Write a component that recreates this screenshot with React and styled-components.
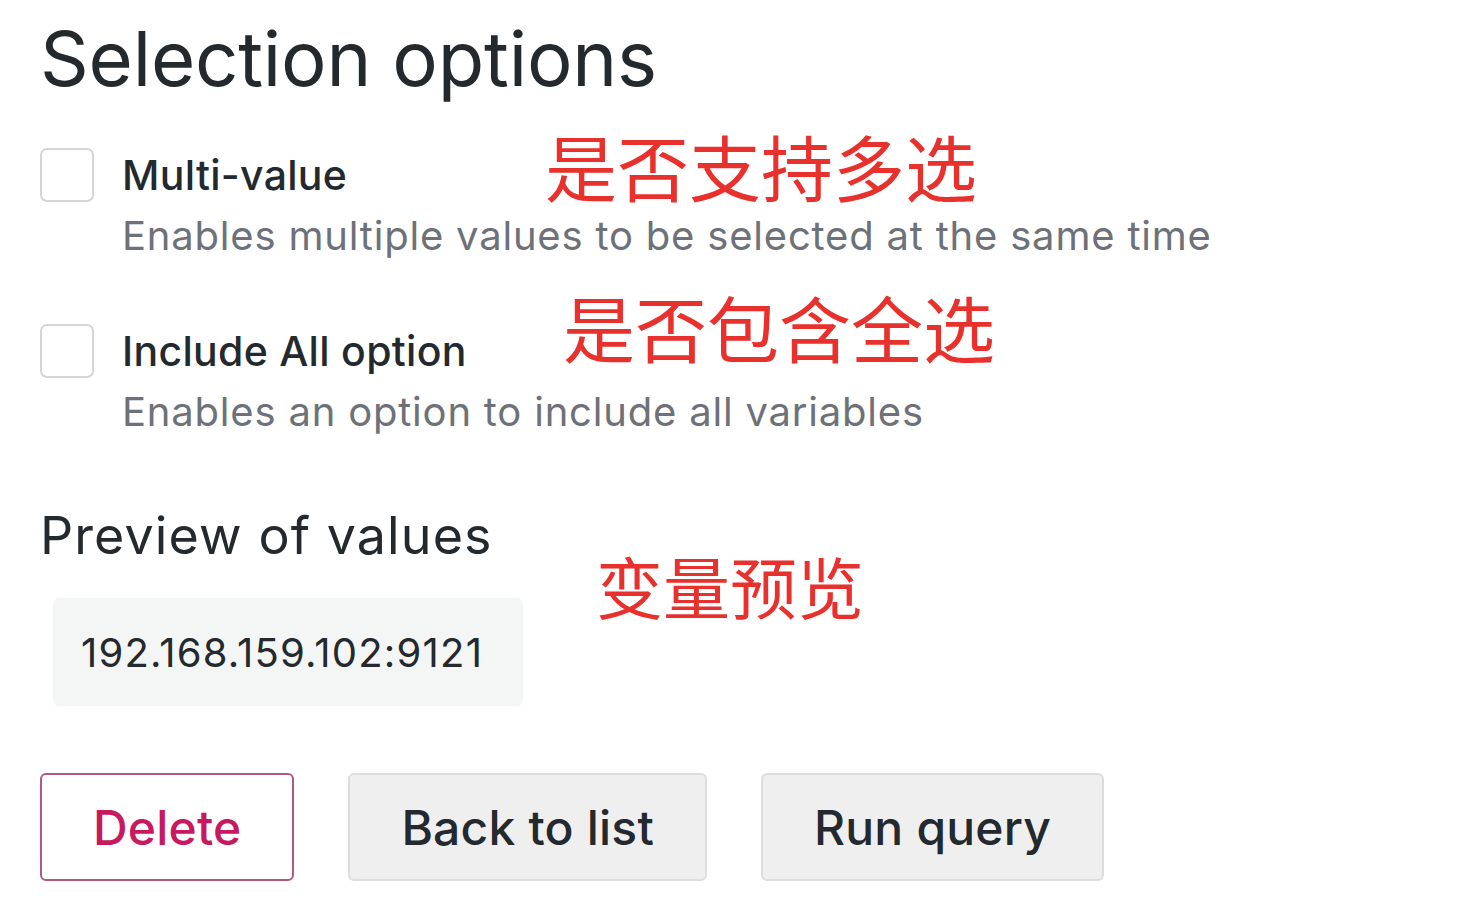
import React from 'react'
import styled, { createGlobalStyle } from 'styled-components'

const GlobalStyle = createGlobalStyle`
  html, body {
    margin: 0;
    padding: 0;
    background: #ffffff;
  }
  body {
    font-family: Inter, "Noto Sans", "Noto Sans CJK SC", sans-serif;
    color: #24292e;
  }
`

const options = [
  {
    label: 'Multi-value',
    description: 'Enables multiple values to be selected at the same time'
  },
  {
    label: 'Include All option',
    description: 'Enables an option to include all variables'
  }
]

const notes = [
  { text: '是否支持多选', left: 545, top: 124, size: 72 },
  { text: '是否包含全选', left: 563, top: 285, size: 72 },
  { text: '变量预览', left: 596, top: 546, size: 67 }
]

const App = () => (
  <Page>
    <GlobalStyle />
    <Title>Selection options</Title>

    <OptionList>
      {options.map(option => (
        <Option key={option.label}>
          <Checkbox type='checkbox' aria-label={option.label} />
          <OptionText>
            <OptionLabel>{option.label}</OptionLabel>
            <OptionDescription>{option.description}</OptionDescription>
          </OptionText>
        </Option>
      ))}
    </OptionList>

    <SectionTitle>Preview of values</SectionTitle>
    <PreviewBox>192.168.159.102:9121</PreviewBox>

    <ButtonRow>
      <Button variant='destructive'>Delete</Button>
      <Button>Back to list</Button>
      <Button>Run query</Button>
    </ButtonRow>

    {notes.map(note => (
      <Note key={note.text} $left={note.left} $top={note.top} $size={note.size}>
        {note.text}
      </Note>
    ))}
  </Page>
)

const Page = styled.div`
  position: relative;
  width: 1461px;
  height: 906px;
  box-sizing: border-box;
  padding: 12px 0 0 40px;
  overflow: hidden;
`

const Title = styled.h2`
  margin: 0;
  font-size: 76px;
  font-weight: 400;
  line-height: 92px;
  letter-spacing: -0.2px;
  color: #24292e;
`

const OptionList = styled.div`
  display: flex;
  flex-direction: column;
  gap: 61px;
  margin-top: 44px;
`

const Option = styled.div`
  display: flex;
  align-items: flex-start;
  gap: 28px;
`

const Checkbox = styled.input`
  appearance: none;
  margin: 0;
  width: 54px;
  height: 54px;
  flex-shrink: 0;
  box-sizing: border-box;
  border: 2px solid #d4d5d7;
  border-radius: 7px;
  background: #ffffff;
`

const OptionText = styled.div`
  display: flex;
  flex-direction: column;
  gap: 7px;
`

const OptionLabel = styled.div`
  font-size: 41px;
  font-weight: 500;
  line-height: 54px;
  letter-spacing: 0.3px;
  color: #24292e;
`

const OptionDescription = styled.div`
  font-size: 40px;
  font-weight: 400;
  line-height: 54px;
  letter-spacing: 0.8px;
  color: #6e7177;
`

const SectionTitle = styled.h3`
  margin: 67px 0 0;
  font-size: 52px;
  font-weight: 400;
  line-height: 60px;
  letter-spacing: 1.1px;
  color: #24292e;
`

const PreviewBox = styled.div`
  display: flex;
  align-items: center;
  width: 470px;
  height: 108px;
  box-sizing: border-box;
  margin: 32px 0 0 13px;
  padding: 0 28px;
  background: #f4f5f5;
  border-radius: 6px;
  font-size: 40px;
  font-weight: 400;
  letter-spacing: 1.2px;
  color: #24292e;
`

const ButtonRow = styled.div`
  display: flex;
  gap: 54px;
  margin-top: 67px;
`

const Button = styled.button`
  height: 108px;
  box-sizing: border-box;
  padding: 0 51px;
  font-family: Inter, "Noto Sans", sans-serif;
  font-size: 48px;
  font-weight: 500;
  letter-spacing: 0.2px;
  border-radius: 6px;
  border: 2px solid ${({ variant }) => (variant === 'destructive' ? '#b0587f' : '#dddddd')};
  background: ${({ variant }) => (variant === 'destructive' ? '#ffffff' : '#efefef')};
  color: ${({ variant }) => (variant === 'destructive' ? '#c71860' : '#24292e')};
`

const Note = styled.div`
  position: absolute;
  left: ${({ $left }) => $left}px;
  top: ${({ $top }) => $top}px;
  font-family: "Noto Sans CJK SC", sans-serif;
  font-size: ${({ $size }) => $size}px;
  font-weight: 400;
  line-height: 1.15;
  color: #e8302c;
  white-space: nowrap;
`

export default App
